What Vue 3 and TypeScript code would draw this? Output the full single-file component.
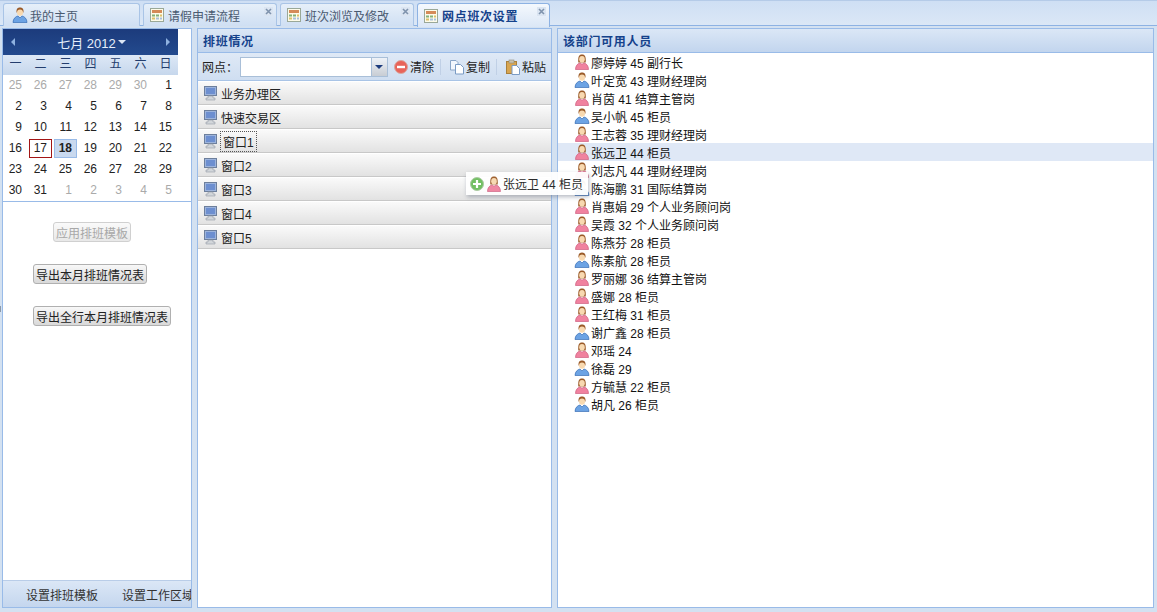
<script setup lang="ts">
interface Person { name: string; age: number; job: string; female: boolean }

const tabs = [
  { label: '请假申请流程', active: false },
  { label: '班次浏览及修改', active: false },
  { label: '网点班次设置', active: true },
]

const weekdays = ['一', '二', '三', '四', '五', '六', '日']
const days = [
  25, 26, 27, 28, 29, 30, 1,
  2, 3, 4, 5, 6, 7, 8,
  9, 10, 11, 12, 13, 14, 15,
  16, 17, 18, 19, 20, 21, 22,
  23, 24, 25, 26, 27, 28, 29,
  30, 31, 1, 2, 3, 4, 5,
]
const isOther = (i: number) => i < 6 || i > 36

const areas = ['业务办理区', '快速交易区', '窗口1', '窗口2', '窗口3', '窗口4', '窗口5']

const people: Person[] = [
  { name: '廖婷婷', age: 45, job: '副行长', female: true },
  { name: '叶定宽', age: 43, job: '理财经理岗', female: false },
  { name: '肖茵', age: 41, job: '结算主管岗', female: true },
  { name: '吴小帆', age: 45, job: '柜员', female: false },
  { name: '王志蓉', age: 35, job: '理财经理岗', female: true },
  { name: '张远卫', age: 44, job: '柜员', female: true },
  { name: '刘志凡', age: 44, job: '理财经理岗', female: true },
  { name: '陈海鹏', age: 31, job: '国际结算岗', female: false },
  { name: '肖惠娟', age: 29, job: '个人业务顾问岗', female: true },
  { name: '吴霞', age: 32, job: '个人业务顾问岗', female: true },
  { name: '陈燕芬', age: 28, job: '柜员', female: true },
  { name: '陈素航', age: 28, job: '柜员', female: false },
  { name: '罗丽娜', age: 36, job: '结算主管岗', female: true },
  { name: '盛娜', age: 28, job: '柜员', female: true },
  { name: '王红梅', age: 31, job: '柜员', female: true },
  { name: '谢广鑫', age: 28, job: '柜员', female: false },
  { name: '邓瑶', age: 24, job: '', female: true },
  { name: '徐磊', age: 29, job: '', female: false },
  { name: '方毓慧', age: 22, job: '柜员', female: true },
  { name: '胡凡', age: 26, job: '柜员', female: false },
]
</script>

<template>
  <div class="page">
    <svg width="0" height="0" class="defs">
      <defs>
        <symbol id="woman" viewBox="0 0 16 16">
          <path d="M4.300 8.500 C3.800 2 5.500 .5 8 .5 C10.500 .5 12.200 2 11.700 8.500 Z" fill="#9a5a28" />
          <ellipse cx="8" cy="5.300" rx="2.800" ry="3.200" fill="#f8d9b0" />
          <path d="M1.500 15.500 C1.500 11.500 4 9.300 6 9 L8 10.200 L10 9 C12 9.300 14.500 11.500 14.500 15.500 Z" fill="#f0829f" stroke="#cf5f80" stroke-width=".7" />
        </symbol>
        <symbol id="man" viewBox="0 0 16 16">
          <path d="M4.500 5.500 C4.200 1.500 5.800 .5 8 .5 C10.200 .5 11.800 1.500 11.500 5.500 Z" fill="#9a5a28" />
          <ellipse cx="8" cy="5.600" rx="3" ry="3.200" fill="#f8d9b0" />
          <path d="M1 15.500 C1 11.500 4 9.300 6 9 L8 11 L10 9 C12 9.300 15 11.500 15 15.500 Z" fill="#6ca3e4" stroke="#3a6fb5" stroke-width=".7" />
        </symbol>
        <symbol id="screen" viewBox="0 0 16 16">
          <rect x="1.500" y="1.500" width="12" height="9" fill="#9db4dc" stroke="#6d7f9c" />
          <rect x="3" y="3" width="9" height="6" fill="#6d8fd0" />
          <path d="M5 11 H10 V13 H12 V15 H3 V13 H5 Z" fill="#d2d6da" stroke="#969ca4" stroke-width=".6" />
        </symbol>
        <symbol id="sheet" viewBox="0 0 16 16">
          <rect x="1.500" y="1.500" width="13" height="13" fill="#fdfbe9" stroke="#9aa898" />
          <rect x="3" y="3" width="10" height="3" fill="#d58a58" />
          <path d="M3 7.500 H6 V9.500 H3 Z M7 7.500 H10 V9.500 H7 Z" fill="#86b078" />
          <path d="M11 7.500 H13 V9.500 H11 Z M3 10.500 H6 V12.500 H3 Z" fill="#dcc06a" />
          <path d="M7 10.500 H10 V12.500 H7 Z M11 10.500 H13 V12.500 H11 Z" fill="#a8c0dc" />
        </symbol>
      </defs>
    </svg>

    <div class="tabbar">
      <div class="tab home">
        <svg class="ico16"><use href="#man" /></svg>
        <span>我的主页</span>
      </div>
      <div v-for="t in tabs" :key="t.label" class="tab" :class="{ active: t.active }">
        <svg class="ico16"><use href="#sheet" /></svg>
        <span>{{ t.label }}</span>
        <i class="close">
          <svg width="9" height="9" viewBox="0 0 9 9"><path d="M2 2 L7 7 M7 2 L2 7" stroke="#7f93ad" stroke-width="1.600" /></svg>
        </i>
      </div>
    </div>

    <div class="main">
      <section class="panel left">
        <div class="cal">
          <div class="cal-head">
            <span class="arrow l" />
            <span class="month">七月 2012<i class="caret" /></span>
            <span class="arrow r" />
          </div>
          <div class="cal-week">
            <span v-for="w in weekdays" :key="w">{{ w }}</span>
          </div>
          <div class="cal-days">
            <span
              v-for="(d, i) in days"
              :key="i"
              :class="{ other: isOther(i), today: i === 22, picked: i === 23 }"
            >{{ d }}</span>
          </div>
        </div>
        <div class="actions">
          <button class="btn off">应用排班模板</button>
          <button class="btn">导出本月排班情况表</button>
          <button class="btn">导出全行本月排班情况表</button>
        </div>
        <div class="foot">
          <span>设置排班模板</span>
          <span>设置工作区域</span>
        </div>
      </section>

      <section class="panel center">
        <div class="title">排班情况</div>
        <div class="toolbar">
          <label>网点：</label>
          <div class="combo"><i class="trigger" /></div>
          <span class="tool first">
            <svg width="16" height="16" viewBox="0 0 16 16"><circle cx="8" cy="8" r="6.500" fill="#e8645a" stroke="#d9a8a0" /><rect x="4" y="6.800" width="8" height="2.400" fill="#fff" /></svg>清除
          </span>
          <b class="sep" />
          <span class="tool">
            <svg width="16" height="16" viewBox="0 0 16 16"><path d="M1.500 1.500 H7 L9 3.500 V11 H1.500 Z" fill="#f3f7fd" stroke="#8ba6c8" /><path d="M6.500 5.500 H11.500 L14.500 8.500 V15 H6.500 Z" fill="#fff" stroke="#7a9bc4" /></svg>复制
          </span>
          <b class="sep" />
          <span class="tool last">
            <svg width="16" height="16" viewBox="0 0 16 16"><rect x="1.500" y="2.500" width="10" height="12" fill="#d8a550" stroke="#a9803c" /><rect x="4" y="1" width="5" height="3" fill="#c9c3b0" stroke="#8f8a78" stroke-width=".6" /><path d="M7 6.500 H11.500 L14.500 9.500 V15.500 H7 Z" fill="#fff" stroke="#7a9bc4" /></svg>粘贴
          </span>
        </div>
        <div v-for="(a, i) in areas" :key="a" class="area">
          <svg class="ico16"><use href="#screen" /></svg>
          <span :class="{ focused: i === 2 }">{{ a }}</span>
        </div>
      </section>

      <section class="panel right">
        <div class="title">该部门可用人员</div>
        <div class="people">
          <div v-for="(p, i) in people" :key="p.name" class="person" :class="{ hover: i === 5 }">
            <svg class="ico16"><use :href="p.female ? '#woman' : '#man'" /></svg>
            <span>{{ p.name }} {{ p.age }} {{ p.job }}</span>
          </div>
        </div>
      </section>
    </div>

    <i class="tick" />

    <!-- drag ghost floats above the panels -->
    <div class="ghost">
      <svg width="16" height="16" viewBox="0 0 16 16"><circle cx="8" cy="8" r="6.500" fill="#6cbd5c" stroke="#a9c9a0" /><path d="M4 8 H12 M8 4 V12" stroke="#fff" stroke-width="2.200" /></svg>
      <svg class="ico16"><use href="#woman" /></svg>
      <span>张远卫 44 柜员</span>
    </div>
  </div>
</template>

<style>
html, body { margin: 0; overflow: hidden; }
</style>

<style scoped>
.page {
  position: relative;
  width: 1157px;
  height: 612px;
  overflow: hidden;
  display: flex;
  flex-direction: column;
  background: #d3e1f1;
  font: 12px "Liberation Sans", "Noto Sans CJK SC", sans-serif;
  color: #222;
}
.defs { position: absolute; }
.ico16 { width: 16px; height: 16px; flex: none; }
.tick { position: absolute; left: 0; top: 306px; width: 1px; height: 6px; background: #8c9aac; }

.tabbar {
  height: 26px;
  box-sizing: border-box;
  display: flex;
  gap: 3px;
  padding: 2px 0 0 3px;
  background: linear-gradient(#cfdff4, #dbe7f6);
  border-top: 1px solid #b5cbe8;
  border-bottom: 1px solid #8db2e3;
}
.tab {
  position: relative;
  width: 134px;
  height: 23px;
  box-sizing: border-box;
  display: flex;
  align-items: center;
  gap: 3px;
  padding-left: 5px;
  border: 1px solid #a9c4e6;
  border-bottom: 0;
  border-radius: 3px 3px 0 0;
  background: linear-gradient(#e6eff9, #cfdff3);
  color: #4a5a70;
}
.tab.home { width: 137px; padding-left: 8px; gap: 2px; }
.tab.active {
  width: 133px;
  height: 24px;
  background: linear-gradient(#f4f8fd, #dbe7f6);
  border-color: #8db2e3;
  color: #15428b;
  font-weight: bold;
  letter-spacing: .7px;
  z-index: 1;
}
.close { position: absolute; right: 3px; top: 3px; width: 9px; height: 9px; background: #dbe5f2; display: flex; }

.main {
  flex: 1;
  display: flex;
  gap: 5px;
  padding: 2px 3px 4px 2px;
  min-height: 0;
}
.panel {
  background: #fff;
  border: 1px solid #99bbe8;
  display: flex;
  flex-direction: column;
  min-height: 0;
  position: relative;
}
.left { width: 188px; flex: none; }
.center { width: 353px; flex: none; }
.right { flex: 1; }

.cal { border-bottom: 1px solid #99bbe8; width: 100%; height: 172px; }
.cal-head {
  width: 175px;
  height: 26px;
  display: flex;
  align-items: center;
  justify-content: space-between;
  background: linear-gradient(#1c3b7c, #234a8e);
  color: #e6eefb;
  font-size: 13px;
}
.month { display: flex; align-items: center; gap: 2px; margin-left: 2px; }
.caret { border: 4px solid transparent; border-top-color: #dce6f5; border-bottom: 0; }
.arrow { width: 0; height: 0; border: 4px solid transparent; }
.arrow.l { border-right-color: #8fb2e0; border-left: 0; margin-left: 8px; }
.arrow.r { border-left-color: #8fb2e0; border-right: 0; margin-right: 8px; }
.cal-week {
  width: 175px;
  height: 20px;
  display: grid;
  grid-template-columns: repeat(7, 25px);
  background: linear-gradient(#dde8f6, #c6d7ec);
  text-align: center;
  line-height: 18px;
  color: #233d6d;
}
.cal-days {
  width: 175px;
  display: grid;
  grid-template-columns: repeat(7, 25px);
  grid-auto-rows: 21px;
  text-align: right;
  line-height: 21px;
}
.cal-days span { box-sizing: border-box; color: #222; padding-right: 6px; }
.cal-days .other { color: #aaa; }
.cal-days .today { border: 1px solid #a31515; line-height: 17px; margin: 1px; padding-right: 4px; }
.cal-days .picked { background: #c9d9ef; border: 1px solid #99bbe8; line-height: 17px; font-weight: bold; margin: 1px; padding-right: 4px; }

.actions {
  flex: 1;
  display: flex;
  flex-direction: column;
  align-items: flex-start;
  gap: 22px;
  padding: 20px 0 0 30px;
}
.btn {
  height: 20px;
  padding: 0 2px;
  border: 1px solid #b0b0b0;
  border-radius: 3px;
  background: linear-gradient(#f8f8f8, #d9d9d9);
  font: inherit;
  color: #222;
  white-space: nowrap;
}
.btn.off { margin-left: 20px; color: #a8a8a8; border-color: #d0d0d0; background: linear-gradient(#fafafa, #e8e8e8); }
.foot {
  height: 26px;
  flex: none;
  display: flex;
  gap: 24px;
  padding-left: 23px;
  align-items: center;
  overflow: hidden;
  white-space: nowrap;
  background: linear-gradient(#dbe7f6, #c4d6ee);
  border-top: 1px solid #b9cde8;
  color: #333;
}

.title {
  height: 24px;
  box-sizing: border-box;
  padding: 5px 5px 3px;
  line-height: 16px;
  background: linear-gradient(#dbe7f6, #c2d5ee);
  border-bottom: 1px solid #99bbe8;
  color: #15428b;
  font-weight: bold;
  letter-spacing: .7px;
}
.toolbar {
  height: 28px;
  box-sizing: border-box;
  display: flex;
  align-items: center;
  padding-left: 4px;
  background: linear-gradient(#dfe9f6, #cfdef1);
  border-bottom: 1px solid #a9c4e6;
}
.combo {
  position: relative;
  width: 148px;
  height: 20px;
  box-sizing: border-box;
  margin-left: 2px;
  background: #fff;
  border: 1px solid #a9bfd8;
}
.trigger {
  position: absolute;
  right: 0;
  top: 0;
  width: 15px;
  height: 18px;
  background: linear-gradient(#eef2f8, #c8cdd4);
  border-left: 1px solid #a9bfd8;
}
.trigger::after {
  content: "";
  position: absolute;
  left: 3px;
  top: 7px;
  border: 4px solid transparent;
  border-top-color: #1c3b7c;
  border-bottom: 0;
}
.tool { display: flex; align-items: center; gap: 1px; margin-left: 8px; color: #222; }
.tool.first { margin-left: 5px; }
.tool.last { margin-left: 8px; }
.sep { width: 1px; height: 16px; background: #c0d0e6; margin-left: 6px; }

.area {
  height: 24px;
  box-sizing: border-box;
  display: flex;
  align-items: center;
  gap: 2px;
  padding-left: 5px;
  background: linear-gradient(#fafafa, #e2e2e2);
  border-bottom: 1px solid #c8c8c8;
  border-top: 1px solid #fff;
}
.focused { outline: 1px dotted #555; padding: 1px 2px; margin-left: 0; }

.person {
  height: 18px;
  display: flex;
  align-items: center;
  gap: 1px;
  padding-left: 16px;
  color: #111;
}
.person.hover { background: #dfe8f6; }

.ghost {
  position: absolute;
  left: 466px;
  top: 172px;
  width: 122px;
  height: 23px;
  box-sizing: border-box;
  display: flex;
  align-items: center;
  gap: 1px;
  padding-left: 3px;
  background: #fff;
  opacity: .95;
  box-shadow: 1px 2px 4px rgba(90, 100, 120, .45);
  white-space: nowrap;
}
</style>
